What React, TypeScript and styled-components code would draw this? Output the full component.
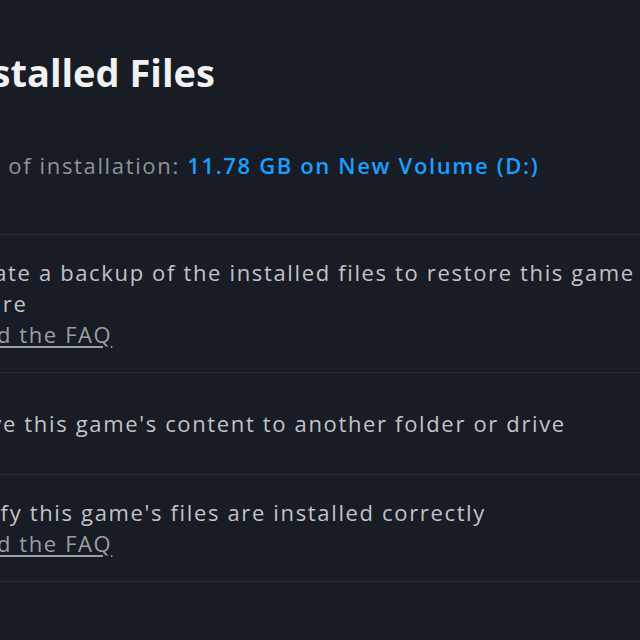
import styled, { createGlobalStyle } from "styled-components";

const GlobalStyle = createGlobalStyle`
  html, body {
    margin: 0;
    padding: 0;
    background: #181c24;
    overflow: hidden;
  }
  body {
    width: 640px;
    height: 640px;
  }
`;

type Action = {
  text: string;
  faq?: boolean;
  button: string;
};

const actions: Array<Action> = [
  {
    text: "Create a backup of the installed files to restore this game in the future",
    faq: true,
    button: "Backup game files",
  },
  {
    text: "Move this game's content to another folder or drive",
    button: "Move install folder",
  },
  {
    text: "Verify this game's files are installed correctly",
    faq: true,
    button: "Verify integrity of game files",
  },
];

export default function App() {
  return (
    <>
      <GlobalStyle />
      <Panel>
        <Title>Installed Files</Title>
        <SizeLine>
          Size of installation: <SizeValue>11.78 GB on New Volume (D:)</SizeValue>
        </SizeLine>
        <ActionList>
          {actions.map((item, idx) => (
            <ActionRow key={idx}>
              <ActionText>
                <Description>{item.text}</Description>
                {item.faq && <FaqLink href="#">Read the FAQ</FaqLink>}
              </ActionText>
              <ActionButton>{item.button}</ActionButton>
            </ActionRow>
          ))}
        </ActionList>
      </Panel>
    </>
  );
}

const Panel = styled.div`
  width: 1100px;
  margin-left: -46px;
  padding-top: 46px;
  font-family: "Open Sans", "Liberation Sans", Arial, sans-serif;
  color: #c0c3c7;
`;

const Title = styled.h1`
  margin: 0;
  font-size: 38px;
  line-height: 52px;
  font-weight: 700;
  color: #f0f1f2;
`;

const SizeLine = styled.div`
  margin-top: 51px;
  font-size: 22px;
  line-height: 32px;
  letter-spacing: 1.65px;
  color: #8e949b;
`;

const SizeValue = styled.span`
  color: #1a9fff;
  font-weight: 600;
`;

const ActionList = styled.div`
  margin-top: 53px;
  width: 1100px;
`;

const ActionRow = styled.div`
  display: flex;
  align-items: center;
  gap: 40px;
  min-height: 57px;
  padding: 22px 0;
  border-top: 1px solid #272c35;
  &:last-child {
    border-bottom: 1px solid #272c35;
  }
`;

const ActionText = styled.div`
  flex: 0 0 790px;
  display: flex;
  flex-direction: column;
`;

const Description = styled.div`
  font-size: 22px;
  line-height: 31px;
  letter-spacing: 1.65px;
  color: #c0c3c7;
`;

const FaqLink = styled.a`
  align-self: flex-start;
  font-size: 22px;
  line-height: 31px;
  letter-spacing: 1.6px;
  color: #9a9fa5;
  text-decoration: underline;
  text-underline-offset: 3px;
`;

const ActionButton = styled.button`
  height: 57px;
  padding: 0 28px;
  border: none;
  border-radius: 3px;
  background: #3d4450;
  color: #e6e8ea;
  font-family: inherit;
  font-size: 20px;
`;
